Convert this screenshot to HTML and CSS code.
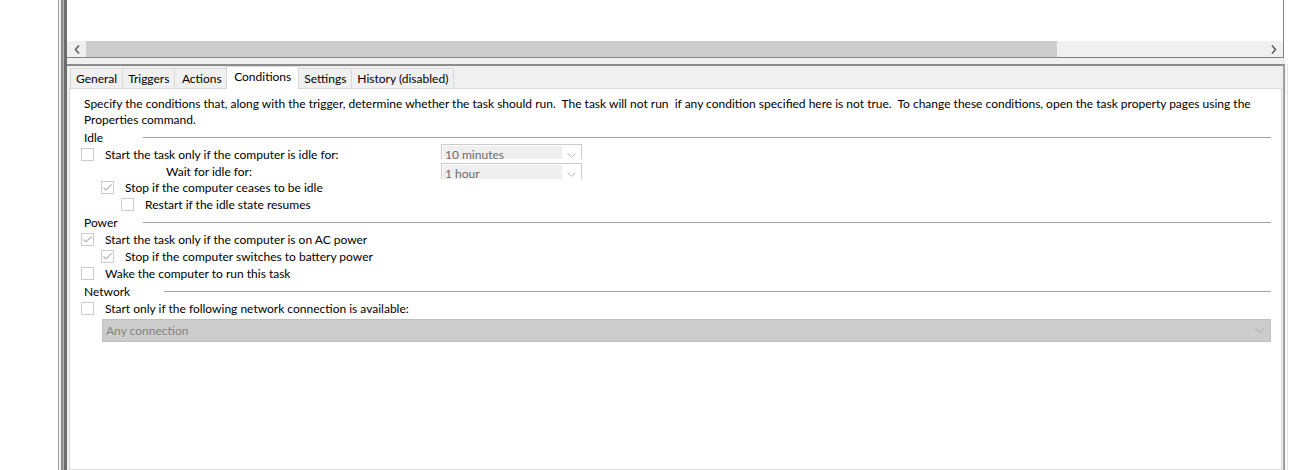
FILE: index.html
```html
<!DOCTYPE html>
<html lang="en">
<head>
    <meta charset="UTF-8">
    <title>Task Scheduler - Conditions</title>
    <link rel="stylesheet" href="styles.css">
</head>
<body>
    <div class="window">
        <div class="sash"></div>
        <div class="main">
            <!-- task list (only its bottom part is visible) -->
            <div class="list">
                <div class="list-body"></div>
                <div class="hscroll">
                    <div class="sb-btn">
                        <svg width="6" height="9" viewBox="0 0 6 9"><polyline points="5,0.5 1.5,4.5 5,8.5" fill="none" stroke="#606060" stroke-width="1.6"/></svg>
                    </div>
                    <div class="sb-track"><div class="sb-thumb"></div></div>
                    <div class="sb-btn">
                        <svg width="6" height="9" viewBox="0 0 6 9"><polyline points="1,0.5 4.5,4.5 1,8.5" fill="none" stroke="#606060" stroke-width="1.6"/></svg>
                    </div>
                </div>
            </div>
            <div class="split-gap"></div>

            <div class="tabctl">
                <div class="tabstrip">
                    <div class="tab">General</div>
                    <div class="tab">Triggers</div>
                    <div class="tab tab-loose">Actions</div>
                    <div class="tab active">Conditions</div>
                    <div class="tab">Settings</div>
                    <div class="tab">History (disabled)</div>
                </div>
                <div class="page">
                    <p class="intro">Specify the conditions that, along with the trigger, determine whether the task should run.  The task will not run  if any condition specified here is not true.  To change these conditions, open the task property pages using the
Properties command.</p>

                    <div class="group"><span class="group-title">Idle</span><span class="rule"></span></div>
                    <div class="row with-combo">
                        <label class="check"><span class="box"></span>Start the task only if the computer is idle for:</label>
                        <div class="combo small first">
                            <span class="combo-text">10 minutes</span>
                            <span class="combo-arrow"><svg width="9" height="5" viewBox="0 0 9 5"><polyline points="0.5,0.5 4.5,4.5 8.5,0.5" fill="none" stroke="#bdbdbd"/></svg></span>
                        </div>
                    </div>
                    <div class="row with-combo short">
                        <span class="sub-label">Wait for idle for:</span>
                        <div class="combo small second">
                            <span class="combo-text">1 hour</span>
                            <span class="combo-arrow"><svg width="9" height="5" viewBox="0 0 9 5"><polyline points="0.5,0.5 4.5,4.5 8.5,0.5" fill="none" stroke="#bdbdbd"/></svg></span>
                        </div>
                    </div>
                    <div class="row indent1">
                        <label class="check"><span class="box"><svg width="11" height="11" viewBox="0 0 11 11"><polyline points="1.5,5.5 4,8 9.5,2.5" fill="none" stroke="#b8b8b8" stroke-width="1.2"/></svg></span>Stop if the computer ceases to be idle</label>
                    </div>
                    <div class="row indent2">
                        <label class="check"><span class="box"></span>Restart if the idle state resumes</label>
                    </div>

                    <div class="group"><span class="group-title">Power</span><span class="rule"></span></div>
                    <div class="row">
                        <label class="check"><span class="box"><svg width="11" height="11" viewBox="0 0 11 11"><polyline points="1.5,5.5 4,8 9.5,2.5" fill="none" stroke="#b8b8b8" stroke-width="1.2"/></svg></span>Start the task only if the computer is on AC power</label>
                    </div>
                    <div class="row indent1">
                        <label class="check"><span class="box"><svg width="11" height="11" viewBox="0 0 11 11"><polyline points="1.5,5.5 4,8 9.5,2.5" fill="none" stroke="#b8b8b8" stroke-width="1.2"/></svg></span>Stop if the computer switches to battery power</label>
                    </div>
                    <div class="row">
                        <label class="check"><span class="box"></span>Wake the computer to run this task</label>
                    </div>

                    <div class="group"><span class="group-title wide">Network</span><span class="rule"></span></div>
                    <div class="row">
                        <label class="check"><span class="box"></span>Start only if the following network connection is available:</label>
                    </div>
                    <div class="combo wide-combo">
                        <span class="combo-text">Any connection</span>
                        <span class="combo-arrow"><svg width="9" height="5" viewBox="0 0 9 5"><polyline points="0.5,0.5 4.5,4.5 8.5,0.5" fill="none" stroke="#a8a8a8"/></svg></span>
                    </div>
                </div>
            </div>
        </div>
        <div class="edge">
            <div class="edge-top"></div>
            <div class="edge-bottom"></div>
        </div>
    </div>
</body>
</html>
```

FILE: styles.css
```css
body {
    margin: 0;
    background-color: #fff;
    font-family: Lato, "Noto Sans", sans-serif;
    font-size: 12px;
    color: #000;
}
.window {
    display: flex;
    height: 470px;
    margin-left: 58px;
    overflow: hidden;
}
.sash {
    width: 9px;
    flex: none;
    background: linear-gradient(to right, #a0a0a0 0 1px, #f0f0f0 1px 3px, #8c8c8c 3px 5px, #b4b4b4 5px 6px, #6d6d6d 6px 9px);
}
.main {
    width: 1218px;
    flex: none;
    display: flex;
    flex-direction: column;
}
.edge {
    width: 4px;
    flex: none;
    display: flex;
    flex-direction: column;
}
.edge-top {
    height: 64px;
    flex: none;
}
.edge-bottom {
    flex: 1;
    background: linear-gradient(to right, #f0f0f0 0 1px, #fff 1px 2px, #e3e3e3 2px 3px, #fff 3px 4px);
}

/* list + scrollbar */
.list {
    height: 57px;
    flex: none;
    margin-right: 1px;
    border-right: 1px solid #828282;
    border-bottom: 1px solid #828282;
    display: flex;
    flex-direction: column;
}
.list-body {
    flex: 1;
}
.hscroll {
    height: 16px;
    display: flex;
    background-color: #f0f0f0;
}
.sb-btn {
    width: 19px;
    display: flex;
    align-items: center;
    justify-content: center;
}
.sb-track {
    flex: 1;
}
.sb-thumb {
    width: 971px;
    height: 100%;
    background-color: #cdcdcd;
}
.split-gap {
    height: 6px;
    flex: none;
    background-color: #f0f0f0;
}

/* tab control */
.tabctl {
    flex: 1;
    min-height: 0;
    display: flex;
    flex-direction: column;
    background-color: #f0f0f0;
    border-top: 2px solid #8c8c8c;
    border-right: 2px solid #a0a0a0;
    padding: 0 1px 0 2px;
}
.tabstrip {
    display: flex;
    flex: none;
    align-items: flex-end;
    height: 22px;
    padding-left: 1px;
}
.tab {
    height: 19px;
    line-height: 19px;
    padding: 0 5px;
    margin-right: -1px;
    border: 1px solid #d9d9d9;
    border-bottom: none;
    background-color: #f0f0f0;
}
.tab.tab-loose {
    padding: 0 6.5px;
}
.tab.active {
    height: 22px;
    margin: 0 -1px -1px -2px;
    padding: 0 7px;
    background-color: #fff;
    position: relative;
    z-index: 1;
}
.page {
    flex: 1;
    background-color: #fff;
    border: 1px solid #d9d9d9;
    padding: 7px 10px 0 11px;
}
.intro {
    margin: 0 0 0 3px;
    line-height: 16px;
    white-space: pre;
}
.group {
    display: flex;
    align-items: center;
    height: 18px;
    padding-left: 3px;
}
.group-title {
    width: 59px;
    flex: none;
}
.group-title.wide {
    width: 80px;
}
.rule {
    flex: 1;
    height: 1px;
    background-color: #a0a0a0;
}
.row {
    height: 17px;
    display: flex;
    align-items: center;
}
.row.short {
    height: 16px;
}
.row.with-combo {
    display: grid;
    grid-template-columns: 360px 141px;
    align-items: center;
}
.indent1 {
    padding-left: 20px;
}
.indent2 {
    padding-left: 40px;
}
.check {
    display: flex;
    align-items: center;
    gap: 11px;
}
.box {
    width: 11px;
    height: 11px;
    border: 1px solid #cccccc;
    background-color: #fff;
    display: flex;
}
.sub-label {
    padding-left: 85px;
}

/* combo boxes */
.combo {
    display: flex;
    overflow: hidden;
}
.combo-text {
    flex: 1;
}
.combo-arrow {
    width: 19px;
    display: flex;
    justify-content: center;
}
.combo.small {
    align-self: start;
    border: 1px solid #cccccc;
    border-bottom: none;
    color: #6d6d6d;
}
.combo.first {
    height: 14px;
    margin-top: -2px;
}
.combo.second {
    height: 15px;
}
.combo.small .combo-text {
    margin: 1px 0 0 1px;
    padding-left: 2px;
    line-height: 18px;
    background-color: #efefef;
}
.combo.small .combo-arrow {
    padding-top: 8px;
    align-items: flex-start;
}
.wide-combo {
    height: 21px;
    margin: 2px 0 0 21px;
    border: 1px solid #bfbfbf;
    background-color: #cccccc;
    color: #838383;
    align-items: center;
}
.wide-combo .combo-text {
    padding-left: 3px;
}
.wide-combo .combo-arrow {
    margin-right: 1px;
}
```
